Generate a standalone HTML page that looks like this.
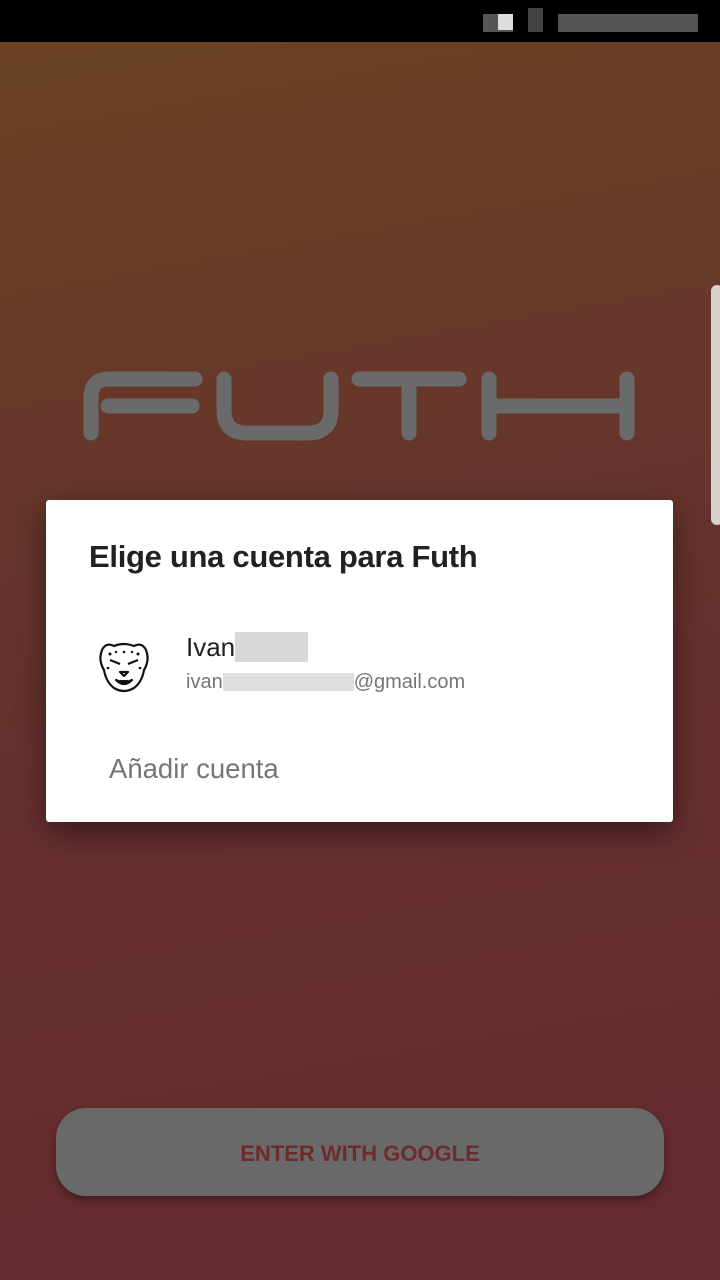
<!DOCTYPE html>
<html><head><meta charset="utf-8"><style>
body{margin:0;width:720px;height:1280px;overflow:hidden;font-family:"Liberation Sans",sans-serif;position:relative;
background:linear-gradient(170deg,#6a4322 0%,#673a28 25%,#66302e 55%,#642a2e 100%);}
.sb{position:absolute;top:0;left:0;width:720px;height:42px;background:#000}
.px{position:absolute;background:#777}
.dlg{position:absolute;left:46px;top:500px;width:627px;height:322px;background:#fff;border-radius:3px;box-shadow:0 10px 30px rgba(0,0,0,.45)}
.btn{position:absolute;left:56px;top:1108px;width:608px;height:88px;background:#696969;border-radius:30px;box-shadow:0 4px 8px rgba(0,0,0,.35);color:#6e2b2c;font-size:22px;font-weight:bold;text-align:center;line-height:92px}
.handle{position:absolute;left:711px;top:285px;width:12px;height:240px;background:#d9d3ce;border-radius:8px}
</style></head><body>
<div class="sb">
<div class="px" style="left:483px;top:14px;width:30px;height:18px;background:#555"></div>
<div class="px" style="left:498px;top:14px;width:15px;height:16px;background:#ddd"></div>
<div class="px" style="left:528px;top:8px;width:15px;height:24px;background:#444"></div>
<div class="px" style="left:558px;top:14px;width:140px;height:18px;background:#555"></div>
</div>
<div class="handle"></div>
<svg style="position:absolute;left:0;top:0" width="720" height="500">
<g fill="none" stroke="#6a6a6a" stroke-width="15" stroke-linecap="round" stroke-linejoin="round">
<path d="M91 433 L91 397 Q91 379 109 379 L195 379 M108 406 L192 406"/>
<path d="M224 379 L224 410 Q224 433 247 433 L308 433 Q331 433 331 410 L331 379"/>
<path d="M359 379 L459 379 M409 379 L409 433"/>
<path d="M489 379 L489 433 M627 379 L627 433 M489 406 L627 406"/>
</g></svg>
<div class="dlg">
<div style="position:absolute;left:43px;top:39px;font-size:31px;font-weight:bold;color:#212121;letter-spacing:-0.3px">Elige una cuenta para Futh</div>
<svg style="position:absolute;left:50px;top:138px" width="56" height="56" viewBox="0 0 56 56">
<g fill="none" stroke="#111" stroke-width="2.2" stroke-linejoin="round">
<path d="M6 12 Q10 4 18 8 Q28 4 38 8 Q46 4 50 12 Q54 22 48 32 Q46 44 38 50 Q28 56 18 50 Q10 44 8 32 Q2 22 6 12 Z"/>
<path d="M14 22 L24 26 M42 22 L32 26 M24 34 L28 38 L32 34 Z M20 42 Q28 50 36 42 Q28 46 20 42 Z"/>
</g>
<g fill="#111"><circle cx="14" cy="16" r="1.5"/><circle cx="42" cy="16" r="1.5"/><circle cx="20" cy="14" r="1.2"/><circle cx="36" cy="14" r="1.2"/><circle cx="12" cy="30" r="1.3"/><circle cx="44" cy="30" r="1.3"/><circle cx="28" cy="14" r="1.3"/><path d="M24 42 L32 42 L30 47 L26 47 Z"/></g>
</svg>
<div style="position:absolute;left:140px;top:132px;font-size:26px;color:#212121">Ivan<span style="display:inline-block;width:73px;height:30px;background:#d8d8d8;vertical-align:-6px"></span></div>
<div style="position:absolute;left:140px;top:171px;font-size:20px;color:#757575">ivan<span style="display:inline-block;width:131px;height:18px;background:#dedede;vertical-align:-3px"></span>@gmail.com</div>
<div style="position:absolute;left:63px;top:253px;font-size:27.5px;color:#757575">Añadir cuenta</div>
</div>
<div class="btn">ENTER WITH GOOGLE</div>
</body></html>
